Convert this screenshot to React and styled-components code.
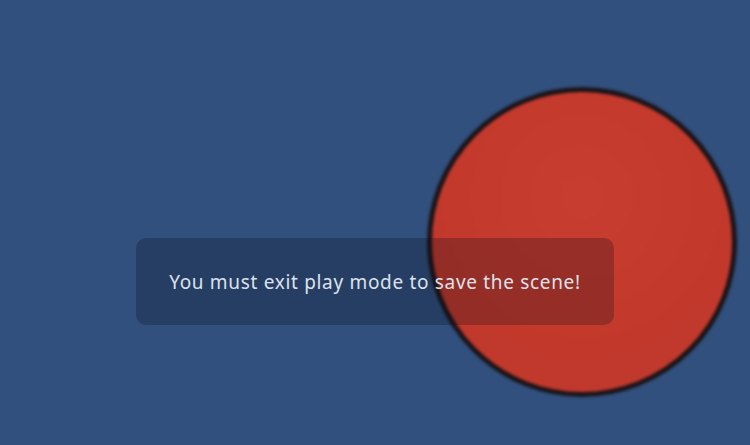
import React from "react";
import styled, { createGlobalStyle } from "styled-components";

const Global = createGlobalStyle`
  html, body { margin: 0; padding: 0; width: 100%; height: 100%; overflow: hidden; }
  #root { width: 100%; height: 100%; }
`;

const Scene = styled.div`
  position: relative;
  width: 750px;
  height: 445px;
  background: #31507d;
  overflow: hidden;
`;

const Ball = styled.div`
  position: absolute;
  left: ${(p) => p.$x - p.$d / 2}px;
  top: ${(p) => p.$y - p.$d / 2}px;
  width: ${(p) => p.$d}px;
  height: ${(p) => p.$d}px;
  box-sizing: border-box;
  border-radius: 50%;
  border: 5px solid #1b1418;
  background: radial-gradient(circle at 50% 35%, #c73d2f 0%, #c2392c 60%, #bd382b 100%);
  filter: blur(1.6px);
`;

const Toast = styled.div`
  position: absolute;
  left: 136px;
  top: 238px;
  width: 478px;
  height: 87px;
  box-sizing: border-box;
  border-radius: 10px;
  background: rgba(4, 8, 22, 0.24);
  display: flex;
  align-items: center;
  justify-content: center;
`;

const Message = styled.span`
  font-family: "Noto Sans", "DejaVu Sans", sans-serif;
  font-size: 19px;
  letter-spacing: 0.68px;
  color: #dde2ea;
  white-space: nowrap;
`;

export default function App() {
  return (
    <>
      <Global />
      <Scene>
        <Ball $x={582} $y={242} $d={310} />
        <Toast>
          <Message>You must exit play mode to save the scene!</Message>
        </Toast>
      </Scene>
    </>
  );
}
